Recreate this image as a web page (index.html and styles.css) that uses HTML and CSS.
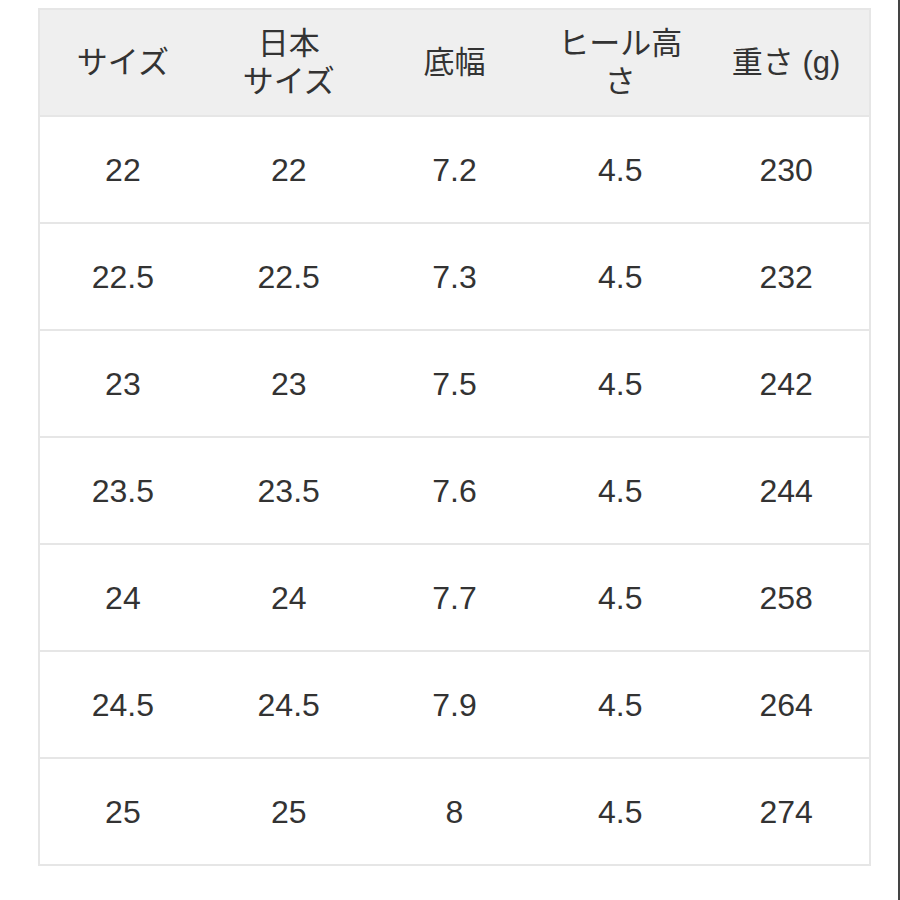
FILE: index.html
```html
<!DOCTYPE html>
<html lang="ja">
<head>
<meta charset="utf-8">
<link rel="stylesheet" href="styles.css">
</head>
<body>
<div class="page">
  <div class="table">
    <div class="row head">
      <div class="cell">サイズ</div>
      <div class="cell">日本<br>サイズ</div>
      <div class="cell">底幅</div>
      <div class="cell">ヒール高<br>さ</div>
      <div class="cell">重さ (g)</div>
    </div>
    <div class="row"><div class="cell">22</div><div class="cell">22</div><div class="cell">7.2</div><div class="cell">4.5</div><div class="cell">230</div></div>
    <div class="row"><div class="cell">22.5</div><div class="cell">22.5</div><div class="cell">7.3</div><div class="cell">4.5</div><div class="cell">232</div></div>
    <div class="row"><div class="cell">23</div><div class="cell">23</div><div class="cell">7.5</div><div class="cell">4.5</div><div class="cell">242</div></div>
    <div class="row"><div class="cell">23.5</div><div class="cell">23.5</div><div class="cell">7.6</div><div class="cell">4.5</div><div class="cell">244</div></div>
    <div class="row"><div class="cell">24</div><div class="cell">24</div><div class="cell">7.7</div><div class="cell">4.5</div><div class="cell">258</div></div>
    <div class="row"><div class="cell">24.5</div><div class="cell">24.5</div><div class="cell">7.9</div><div class="cell">4.5</div><div class="cell">264</div></div>
    <div class="row"><div class="cell">25</div><div class="cell">25</div><div class="cell">8</div><div class="cell">4.5</div><div class="cell">274</div></div>
  </div>
</div>
</body>
</html>
```
FILE: styles.css
```css
html, body {
  margin: 0;
  padding: 0;
  background: #ffffff;
}
.page {
  box-sizing: border-box;
  width: 900px;
  height: 900px;
  padding: 8px 0 0 38px;
  border-right: 2px solid #444444;
  font-family: "Liberation Sans", "Noto Sans CJK JP", sans-serif;
  color: #333333;
}
.table {
  box-sizing: border-box;
  width: 833px;
  border: 2px solid #e6e6e6;
}
.row {
  display: grid;
  grid-template-columns: repeat(5, 1fr);
  height: 105px;
  border-bottom: 2px solid #e6e6e6;
}
.row:last-child {
  border-bottom: none;
}
.head {
  background: #efefef;
}
.cell {
  display: flex;
  align-items: center;
  justify-content: center;
  text-align: center;
  font-size: 32px;
  line-height: 38px;
  padding: 0 8px;
}
.head .cell {
  font-size: 31px;
}
```
